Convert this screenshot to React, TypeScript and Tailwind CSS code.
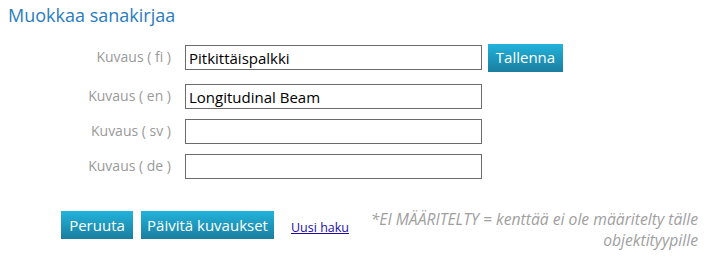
import React from 'react';

const font = { fontFamily: '"Open Sans", "Noto Sans", sans-serif' };

const btn =
  'h-[28px] px-[6px] text-[15px] text-white bg-gradient-to-b from-[#22b3dc] to-[#1a7e9f] leading-none';

function Row({ label, value, save }: { label: string; value: string; save?: boolean }) {
  return (
    <div className={`flex items-center ${save ? 'h-[39px] pb-[4px]' : 'h-[35px]'}`}>
      <div className="w-[172px] text-right text-[14px] text-[#9a9a9a] pr-[1px] -mt-[3px]">{label}</div>
      <input
        readOnly
        value={value}
        className="ml-[13px] w-[297px] h-[25px] border border-[#6b6b6b] px-[3px] text-[15px] text-black outline-none"
      />
      {save && <button className={`${btn} ml-[6px] w-[75px]`}>Tallenna</button>}
    </div>
  );
}

export default function App() {
  return (
    <div className="w-[707px] h-[259px] bg-white relative overflow-hidden" style={font}>
      <div className="pl-[8px] pt-[3px] text-[18px] text-[#2a7cc0] leading-[24px]">Muokkaa sanakirjaa</div>
      <div className="mt-[13px]">
        <Row label="Kuvaus ( fi )" value="Pitkittäispalkki" save />
        <Row label="Kuvaus ( en )" value="Longitudinal Beam" />
        <Row label="Kuvaus ( sv )" value="" />
        <Row label="Kuvaus ( de )" value="" />
      </div>
      <div className="flex items-start mt-[27px] pl-[61px] pr-[9px]">
        <button className={`${btn} w-[72px]`}>Peruuta</button>
        <button className={`${btn} ml-[8px] w-[133px]`}>Päivitä kuvaukset</button>
        <a href="#" className="ml-[17px] mt-[8px] text-[12.5px] text-[#1a0dab] underline">Uusi haku</a>
        <div className="flex-1 text-right italic text-[15.7px] text-[#a0a0a0] leading-[21px] -mt-[2px]">
          *EI MÄÄRITELTY = kenttää ei ole määritelty tälle
          <br />
          objektityypille
        </div>
      </div>
    </div>
  );
}
